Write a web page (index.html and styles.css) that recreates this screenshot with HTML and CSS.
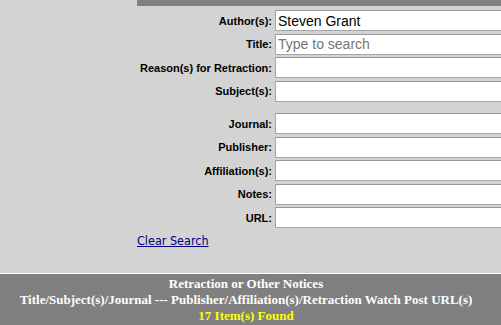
FILE: index.html
```html
<!DOCTYPE html>
<html>
<head>
<meta charset="utf-8">
<link rel="stylesheet" href="styles.css">
</head>
<body>
<div class="topbar"></div>
<form class="search">
  <div class="group">
    <label class="lbl">Author(s):</label><input class="fld" type="text" value="Steven Grant">
    <label class="lbl">Title:</label><input class="fld" type="text" placeholder="Type to search">
    <label class="lbl">Reason(s) for Retraction:</label><input class="fld" type="text">
    <label class="lbl">Subject(s):</label><input class="fld" type="text">
  </div>
  <div class="group second">
    <label class="lbl">Journal:</label><input class="fld" type="text">
    <label class="lbl">Publisher:</label><input class="fld" type="text">
    <label class="lbl">Affiliation(s):</label><input class="fld" type="text">
    <label class="lbl">Notes:</label><input class="fld" type="text">
    <label class="lbl">URL:</label><input class="fld" type="text">
  </div>
  <div class="clear"><a href="#">Clear Search</a></div>
</form>
<div class="results">
  <div class="line">Retraction or Other Notices</div>
  <div class="line">Title/Subject(s)/Journal --- Publisher/Affiliation(s)/Retraction Watch Post URL(s)</div>
  <div class="line found">17 Item(s) Found</div>
</div>
</body>
</html>
```
FILE: styles.css
```css
html, body {
  margin: 0;
  padding: 0;
  background: #d3d3d3;
  overflow: hidden;
}
.topbar {
  margin-left: 137px;
  height: 6px;
  background: #808080;
}
.search {
  margin: 0;
  padding: 4px 0 0 137px;
}
.group {
  display: grid;
  grid-template-columns: 135px 320px;
  column-gap: 3px;
  row-gap: 2.4px;
  align-items: center;
}
.group.second {
  margin-top: 11px;
}
.lbl {
  font-family: "Liberation Sans", Arial, sans-serif;
  font-weight: bold;
  font-size: 11px;
  color: #000;
  text-align: right;
  white-space: nowrap;
}
.fld {
  box-sizing: border-box;
  height: 21.2px;
  width: 320px;
  margin: 0;
  padding: 0 2px;
  border: 1px solid #a6a6a6;
  border-top-color: #9a9a9a;
  background: #fff;
  font-family: "Liberation Sans", Arial, sans-serif;
  font-size: 14px;
  color: #000;
  outline: none;
}
.fld::placeholder {
  color: #757575;
}
.clear {
  padding-top: 5px;
  height: 40px;
  font-family: "DejaVu Sans Condensed", "DejaVu Sans", sans-serif;
  font-size: 12.5px;
}
.clear a {
  color: #000080;
}
.results {
  border-top: 1px solid #fff;
  border-bottom: 2px solid #3b78d8;
  background: #808080;
  padding: 2px 9px 2px 0;
  text-align: center;
  font-family: "Liberation Serif", "Times New Roman", serif;
  font-weight: bold;
  font-size: 13px;
  line-height: 16px;
  color: #fff;
}
.found {
  color: #ffff00;
}
```
